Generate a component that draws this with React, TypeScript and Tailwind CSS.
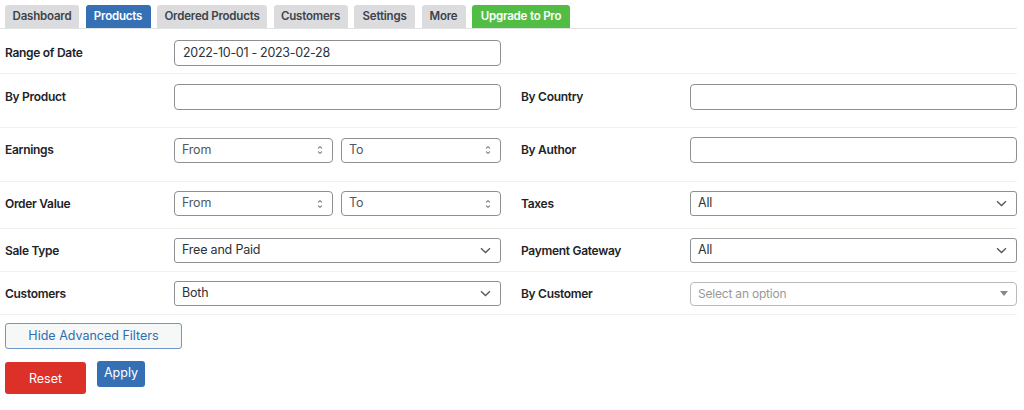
import type { ReactNode } from "react";

const tabs = [
  { label: "Dashboard", width: "w-[74px]", tone: "idle" },
  { label: "Products", width: "w-[65px]", tone: "active" },
  { label: "Ordered Products", width: "w-[110px]", tone: "idle" },
  { label: "Customers", width: "w-[74px]", tone: "idle" },
  { label: "Settings", width: "w-[61px]", tone: "idle" },
  { label: "More", width: "w-[44px]", tone: "idle" },
  { label: "Upgrade to Pro", width: "w-[98px]", tone: "pro" }
] as const;

const toneClass = {
  idle: "bg-[#dcdcde] text-[#3c434a]",
  active: "bg-[#3570b5] text-white",
  pro: "bg-[#52bd45] text-white"
} as const;

export default function App() {
  return (
    <div className="w-[1017px] bg-white font-['Inter',sans-serif] text-[#1d2327]">
      <nav className="flex gap-[6.5px] border-b border-[#e2e3e5] pl-[5px] pt-[5px]">
        {tabs.map((tab) => (
          <div
            key={tab.label}
            className={`flex h-[23px] items-center justify-center rounded-t-[3px] text-[11.5px] font-semibold tracking-[-0.2px] ${tab.width} ${toneClass[tab.tone]}`}
          >
            {tab.label}
          </div>
        ))}
      </nav>

      <FilterRow pad="pt-[11px] pb-[7px]" label="Range of Date" control={<TextBox value="2022-10-01 - 2023-02-28" />} />
      <FilterRow
        pad="pt-[10px] pb-[17px]"
        label="By Product"
        control={<TextBox />}
        rightLabel="By Country"
        rightControl={<TextBox />}
      />
      <FilterRow
        pad="pt-[9px] pb-[18px]"
        label="Earnings"
        control={<RangePair />}
        rightLabel="By Author"
        rightControl={<TextBox />}
      />
      <FilterRow
        pad="pt-[9px] pb-[12px]"
        label="Order Value"
        control={<RangePair />}
        rightLabel="Taxes"
        rightControl={<SelectBox value="All" />}
      />
      <FilterRow
        pad="pt-[9px] pb-[8px]"
        label="Sale Type"
        control={<SelectBox value="Free and Paid" />}
        rightLabel="Payment Gateway"
        rightControl={<SelectBox value="All" />}
      />
      <FilterRow
        pad="pt-[9px] pb-[8px]"
        label="Customers"
        control={<SelectBox value="Both" />}
        rightLabel="By Customer"
        rightControl={<Select2Box />}
      />

      <div className="pl-[5px] pt-[7px]">
        <button className="h-[26px] w-[177px] rounded-[3px] border border-[#6d97cb] bg-[#f6f7f7] text-[12.5px] text-[#2f6db2]">
          Hide Advanced Filters
        </button>
      </div>

      <div className="flex items-start gap-[11px] pl-[5px] pt-[13px]">
        <button className="h-[32px] w-[81px] rounded-[3px] bg-[#dc3129] pt-[2px] text-[12.5px] text-white">Reset</button>
        <button className="h-[26px] w-[48px] -translate-y-[1px] rounded-[3px] bg-[#3570b5] pb-[2px] text-[12.5px] text-white">
          Apply
        </button>
      </div>
    </div>
  );
}

function FilterRow({
  pad,
  label,
  control,
  rightLabel,
  rightControl
}: {
  pad: string;
  label: string;
  control: ReactNode;
  rightLabel?: string;
  rightControl?: ReactNode;
}) {
  return (
    <div className={`flex border-b border-[#f0f0f1] ${pad}`}>
      <div className="flex items-center pl-[5px]">
        <span className="w-[169px] text-[12px] font-semibold tracking-[-0.3px] text-[#1d2327]">{label}</span>
        <div className="w-[327px]">{control}</div>
      </div>
      {rightLabel ? (
        <div className="ml-[20px] flex items-center">
          <span className="w-[169px] text-[12px] font-semibold tracking-[-0.3px] text-[#1d2327]">{rightLabel}</span>
          <div className="w-[327px]">{rightControl}</div>
        </div>
      ) : null}
    </div>
  );
}

function TextBox({ value }: { value?: string }) {
  return (
    <div className="flex h-[26px] items-center rounded-[4px] border border-[#8c8f94] px-[8px] text-[12.5px] tracking-[-0.3px] text-[#2c3338]">
      {value}
    </div>
  );
}

function RangePair() {
  return (
    <div className="flex gap-[8px]">
      <NumberBox placeholder="From" width="w-[159px]" />
      <NumberBox placeholder="To" width="w-[160px]" />
    </div>
  );
}

function NumberBox({ placeholder, width }: { placeholder: string; width: string }) {
  return (
    <div
      className={`flex h-[25px] items-center justify-between rounded-[4px] border border-[#8c8f94] pl-[7px] pr-[9px] text-[12.5px] tracking-[-0.2px] text-[#50575e] ${width}`}
    >
      <span>{placeholder}</span>
      <svg width="6" height="10" viewBox="0 0 6 10" fill="none" stroke="#8c8f94" strokeWidth="1.1">
        <path d="M1 3.5 3 1.5 5 3.5" />
        <path d="M1 6.5 3 8.5 5 6.5" />
      </svg>
    </div>
  );
}

function SelectBox({ value }: { value: string }) {
  return (
    <div className="flex h-[25px] items-center justify-between rounded-[3px] border border-[#8c8f94] pl-[7px] pr-[9px] text-[12.5px] tracking-[-0.2px] text-[#2c3338]">
      <span>{value}</span>
      <svg width="11" height="7" viewBox="0 0 11 7" fill="none" stroke="#50575e" strokeWidth="1.3">
        <path d="M1 1.2 5.5 5.5 10 1.2" />
      </svg>
    </div>
  );
}

function Select2Box() {
  return (
    <div className="flex h-[24px] items-center justify-between rounded-[4px] border border-[#bbbbbb] pl-[7px] pr-[8px] text-[12px] tracking-[-0.2px] text-[#999999]">
      <span>Select an option</span>
      <svg width="8" height="5" viewBox="0 0 8 5" fill="#888888">
        <path d="M0 0h8L4 5z" />
      </svg>
    </div>
  );
}
